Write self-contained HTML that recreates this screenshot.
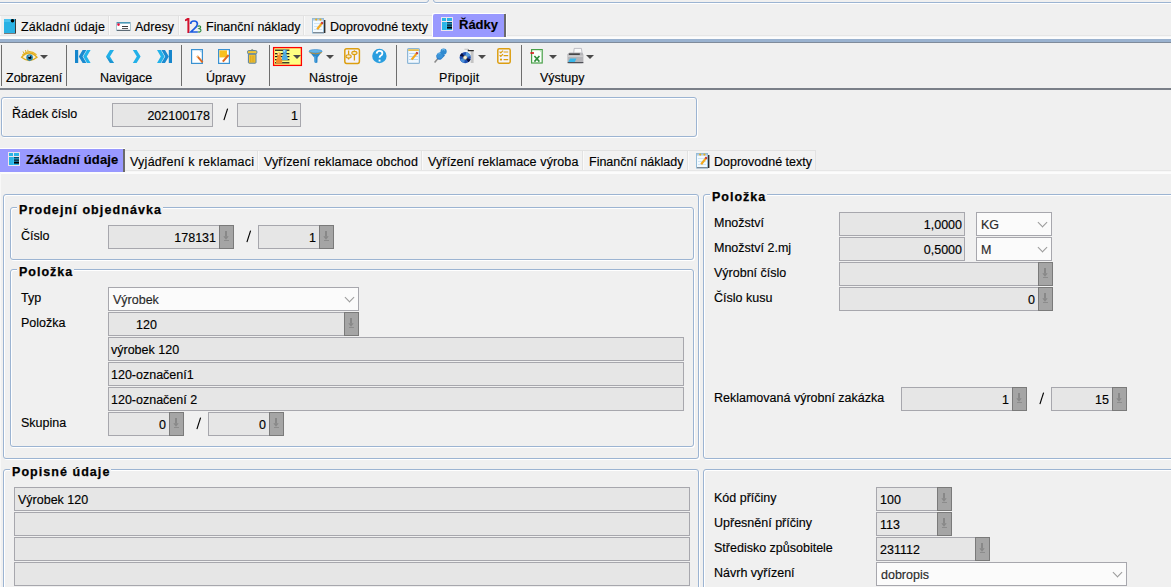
<!DOCTYPE html>
<html><head><meta charset="utf-8">
<style>
*{box-sizing:border-box}
html,body{margin:0;padding:0}
body{width:1171px;height:587px;overflow:hidden;position:relative;background:#f0f0f0;font-family:"Liberation Sans",sans-serif;font-size:12.5px;color:#000;-webkit-text-stroke:0.15px #000}
.a{position:absolute}
.t{position:absolute;white-space:nowrap;line-height:14px;height:14px}
.b{font-weight:bold}
.hl{position:absolute;height:1px;background:#9cb4d2}
.vl{position:absolute;width:1px;background:#9cb4d2}
.grp{position:absolute;border:1px solid #9cb4d2;border-radius:3px;box-shadow:inset 1px 1px 0 #fff, 1px 1px 0 #fff}
.gt{position:absolute;white-space:nowrap;line-height:14px;height:14px;font-weight:bold;background:#f0f0f0;padding:0 1px 0 2px;-webkit-text-stroke:0.25px #000}
.fld{position:absolute;height:24px;background:#e6e6e6;border:1px solid #a7a7ad;line-height:24px;padding:0 4px;white-space:nowrap}
.r{text-align:right;padding-right:2px}
.btn{position:absolute;top:-1px;right:-1px;width:15px;height:24px;background:#a5a5a5;border:1px solid #7a7a7a}
.cmb{position:absolute;height:24px;background:#fbfbfb;border:1px solid #a7a7ad;line-height:24px;padding:0 4px;white-space:nowrap;color:#333}
.sep{position:absolute;top:45px;width:1px;height:41px;background:#6d6d6d}
.tab{position:absolute;top:15px;height:20px;border-top:1px solid #e2e2e2;border-right:1px solid #e2e2e2;box-shadow:inset 1px 0 0 #fafafa}
.stab{position:absolute;top:150px;height:21px;border-top:1px solid #e2e2e2;border-right:1px solid #e2e2e2;box-shadow:inset 1px 0 0 #fafafa;background:#f2f2f2}
.chev{position:absolute;right:3px;top:9px;width:10px;height:6px}
.chev:before{content:"";position:absolute;left:1px;top:-3px;width:6px;height:6px;border-right:1px solid #9a9a9a;border-bottom:1px solid #9a9a9a;transform:rotate(45deg)}
</style></head><body>

<!-- top panel border -->
<div class="a" style="left:-5px;top:-20px;width:434px;height:23px;border:1px solid #9cb4d2;border-radius:3px;box-shadow:0 1px 0 #fff"></div>
<div class="a" style="left:433px;top:-20px;width:760px;height:23px;border:1px solid #9cb4d2;border-radius:3px;box-shadow:0 1px 0 #fff"></div>

<!-- top tabs -->
<div class="tab" style="left:0;width:109px"></div>
<div class="tab" style="left:109px;width:70px"></div>
<div class="tab" style="left:179px;width:125px"></div>
<div class="tab" style="left:304px;width:129px"></div>
<div class="a" style="left:0;top:35px;width:1171px;height:1px;background:#e6e6e6"></div><div class="a" style="left:0;top:36px;width:1171px;height:1px;background:#f6f6f6"></div><div class="a" style="left:0;top:37px;width:1171px;height:2px;background:#fcfcfc"></div>
<div class="a" style="left:0;top:39px;width:1171px;height:3px;background:#9ab2cf"></div>
<div class="a" style="left:0;top:42px;width:1171px;height:1px;background:#7f8b9b"></div>

<div class="a" style="left:433px;top:14px;width:73px;height:23px;background:#9999ff;border-radius:2px 0 0 0;box-shadow:-1px -1px 0 #fff,1px 0 0 #fafafa;border-right:2px solid #6a6a6a"></div>

<div class="t" style="left:21px;top:20px;letter-spacing:0.15px">Základní údaje</div>
<div class="t" style="left:135px;top:20px">Adresy</div>
<div class="t" style="left:206px;top:20px">Finanční náklady</div>
<div class="t" style="left:330px;top:20px">Doprovodné texty</div>
<div class="t b" style="left:459px;top:18px;font-size:13px">Řádky</div>

<!-- toolbar -->
<div class="sep" style="left:1px"></div>
<div class="sep" style="left:66px"></div>
<div class="sep" style="left:181px"></div>
<div class="sep" style="left:269px"></div>
<div class="sep" style="left:396px"></div>
<div class="sep" style="left:521px"></div>
<div class="a" style="left:0;top:88px;width:1171px;height:2px;background:#7a7f88"></div>

<div class="t" style="left:6px;top:71px">Zobrazení</div>
<div class="t" style="left:100px;top:71px">Navigace</div>
<div class="t" style="left:206px;top:71px">Úpravy</div>
<div class="t" style="left:309px;top:71px;letter-spacing:0.3px">Nástroje</div>
<div class="t" style="left:439px;top:71px;letter-spacing:0.3px">Připojit</div>
<div class="t" style="left:540px;top:71px">Výstupy</div>

<!-- Řádek číslo panel -->
<div class="grp" style="left:1px;top:97px;width:696px;height:40px"></div>
<div class="t" style="left:12px;top:107px">Řádek číslo</div>
<div class="fld r" style="left:112px;top:103px;width:101px">202100178</div>
<svg class="a" style="left:223px;top:108px" width="6" height="13"><line x1="0.9" y1="12.2" x2="4.6" y2="0.6" stroke="#000" stroke-width="1.15"/></svg>
<div class="fld r" style="left:237px;top:103px;width:64px">1</div>

<!-- sub tabs -->
<div class="stab" style="left:124px;width:134px"></div>
<div class="stab" style="left:258px;width:164px"></div>
<div class="stab" style="left:422px;width:161px"></div>
<div class="stab" style="left:583px;width:105px"></div>
<div class="stab" style="left:688px;width:128px"></div>
<div class="a" style="left:0;top:170px;width:1171px;height:1px;background:#e6e6e6"></div><div class="a" style="left:0;top:171px;width:1171px;height:1px;background:#f7f7f7"></div>
<div class="a" style="left:0;top:149px;width:125px;height:23px;background:#9999ff;border-right:2px solid #6a6a6a;box-shadow:0 -1px 0 #fff"></div>
<div class="a" style="left:0;top:172px;width:1171px;height:2px;background:#fcfcfc"></div>
<div class="a" style="left:0;top:173px;width:1px;height:414px;background:#f8f8f8"></div>

<div class="t b" style="left:26px;top:153px;font-size:13px;letter-spacing:0.15px">Základní údaje</div>
<div class="t" style="left:130px;top:155px;letter-spacing:0.25px">Vyjádření k reklamaci</div>
<div class="t" style="left:264px;top:155px;letter-spacing:0.12px">Vyřízení reklamace obchod</div>
<div class="t" style="left:428px;top:155px;letter-spacing:0.12px">Vyřízení reklamace výroba</div>
<div class="t" style="left:589px;top:155px">Finanční náklady</div>
<div class="t" style="left:714px;top:155px">Doprovodné texty</div>


<!-- ===== left outer panel ===== -->
<div class="grp" style="left:3px;top:194px;width:696px;height:265px"></div>
<div class="grp" style="left:10px;top:207px;width:684px;height:53px"></div>
<div class="gt" style="left:17px;top:203px;letter-spacing:1.1px">Prodejní objednávka</div>
<div class="t" style="left:21px;top:229px">Číslo</div>
<div class="fld r" style="left:108px;top:225px;width:126px;padding-right:17px">178131<div class="btn"><svg width="13" height="22" style="position:absolute;left:0;top:0"><rect x="5" y="5" width="2" height="5.5" fill="#888"/><path d="M3.3 10.2h5.4l-2.7 3.6z" fill="#888"/><rect x="4" y="14" width="5" height="1" fill="#8c8c8c"/></svg></div></div>
<svg class="a" style="left:246px;top:230px" width="6" height="13"><line x1="0.9" y1="12.2" x2="4.6" y2="0.6" stroke="#000" stroke-width="1.15"/></svg>
<div class="fld r" style="left:258px;top:225px;width:76px;padding-right:17px">1<div class="btn"><svg width="13" height="22" style="position:absolute;left:0;top:0"><rect x="5" y="5" width="2" height="5.5" fill="#888"/><path d="M3.3 10.2h5.4l-2.7 3.6z" fill="#888"/><rect x="4" y="14" width="5" height="1" fill="#8c8c8c"/></svg></div></div>

<div class="grp" style="left:10px;top:269px;width:684px;height:178px"></div>
<div class="gt" style="left:17px;top:265px;letter-spacing:1.0px">Položka</div>
<div class="t" style="left:21px;top:291px">Typ</div>
<div class="cmb" style="left:108px;top:287px;width:251px">Výrobek<div class="chev"></div></div>
<div class="t" style="left:21px;top:316px">Položka</div>
<div class="fld" style="left:108px;top:312px;width:251px;padding-left:27px">120<div class="btn"><svg width="13" height="22" style="position:absolute;left:0;top:0"><rect x="5" y="5" width="2" height="5.5" fill="#888"/><path d="M3.3 10.2h5.4l-2.7 3.6z" fill="#888"/><rect x="4" y="14" width="5" height="1" fill="#8c8c8c"/></svg></div></div>
<div class="fld" style="left:108px;top:337px;width:576px;padding-left:2px">výrobek 120</div>
<div class="fld" style="left:108px;top:362px;width:576px;padding-left:2px">120-označení1</div>
<div class="fld" style="left:108px;top:387px;width:576px;padding-left:2px">120-označení 2</div>
<div class="t" style="left:21px;top:416px">Skupina</div>
<div class="fld r" style="left:108px;top:412px;width:76px;padding-right:17px">0<div class="btn"><svg width="13" height="22" style="position:absolute;left:0;top:0"><rect x="5" y="5" width="2" height="5.5" fill="#888"/><path d="M3.3 10.2h5.4l-2.7 3.6z" fill="#888"/><rect x="4" y="14" width="5" height="1" fill="#8c8c8c"/></svg></div></div>
<svg class="a" style="left:196px;top:417px" width="6" height="13"><line x1="0.9" y1="12.2" x2="4.6" y2="0.6" stroke="#000" stroke-width="1.15"/></svg>
<div class="fld r" style="left:208px;top:412px;width:76px;padding-right:17px">0<div class="btn"><svg width="13" height="22" style="position:absolute;left:0;top:0"><rect x="5" y="5" width="2" height="5.5" fill="#888"/><path d="M3.3 10.2h5.4l-2.7 3.6z" fill="#888"/><rect x="4" y="14" width="5" height="1" fill="#8c8c8c"/></svg></div></div>

<!-- ===== right panel ===== -->
<div class="grp" style="left:703px;top:194px;width:480px;height:265px"></div>
<div class="gt" style="left:710px;top:190px;letter-spacing:1.0px">Položka</div>
<div class="t" style="left:714px;top:216px">Množství</div>
<div class="fld r" style="left:839px;top:212px;width:126px">1,0000</div>
<div class="cmb" style="left:976px;top:212px;width:76px">KG<div class="chev"></div></div>
<div class="t" style="left:714px;top:241px">Množství 2.mj</div>
<div class="fld r" style="left:839px;top:237px;width:126px">0,5000</div>
<div class="cmb" style="left:976px;top:237px;width:76px">M<div class="chev"></div></div>
<div class="t" style="left:714px;top:266px">Výrobní číslo</div>
<div class="fld r" style="left:839px;top:262px;width:214px;padding-right:17px"><div class="btn"><svg width="13" height="22" style="position:absolute;left:0;top:0"><rect x="5" y="5" width="2" height="5.5" fill="#888"/><path d="M3.3 10.2h5.4l-2.7 3.6z" fill="#888"/><rect x="4" y="14" width="5" height="1" fill="#8c8c8c"/></svg></div></div>
<div class="t" style="left:714px;top:291px">Číslo kusu</div>
<div class="fld r" style="left:839px;top:287px;width:214px;padding-right:17px">0<div class="btn"><svg width="13" height="22" style="position:absolute;left:0;top:0"><rect x="5" y="5" width="2" height="5.5" fill="#888"/><path d="M3.3 10.2h5.4l-2.7 3.6z" fill="#888"/><rect x="4" y="14" width="5" height="1" fill="#8c8c8c"/></svg></div></div>
<div class="t" style="left:714px;top:391px">Reklamovaná výrobní zakázka</div>
<div class="fld r" style="left:901px;top:387px;width:126px;padding-right:17px">1<div class="btn"><svg width="13" height="22" style="position:absolute;left:0;top:0"><rect x="5" y="5" width="2" height="5.5" fill="#888"/><path d="M3.3 10.2h5.4l-2.7 3.6z" fill="#888"/><rect x="4" y="14" width="5" height="1" fill="#8c8c8c"/></svg></div></div>
<svg class="a" style="left:1039px;top:392px" width="6" height="13"><line x1="0.9" y1="12.2" x2="4.6" y2="0.6" stroke="#000" stroke-width="1.15"/></svg>
<div class="fld r" style="left:1051px;top:387px;width:76px;padding-right:17px">15<div class="btn"><svg width="13" height="22" style="position:absolute;left:0;top:0"><rect x="5" y="5" width="2" height="5.5" fill="#888"/><path d="M3.3 10.2h5.4l-2.7 3.6z" fill="#888"/><rect x="4" y="14" width="5" height="1" fill="#8c8c8c"/></svg></div></div>

<!-- ===== popisné údaje ===== -->
<div class="grp" style="left:3px;top:469px;width:696px;height:140px"></div>
<div class="gt" style="left:10px;top:465px;letter-spacing:1.05px">Popisné údaje</div>
<div class="fld" style="left:14px;top:487px;width:676px;padding-left:3px">Výrobek 120</div>
<div class="fld" style="left:14px;top:512px;width:676px"></div>
<div class="fld" style="left:14px;top:537px;width:676px"></div>
<div class="fld" style="left:14px;top:562px;width:676px"></div>

<!-- ===== right bottom ===== -->
<div class="grp" style="left:703px;top:469px;width:480px;height:140px"></div>
<div class="t" style="left:714px;top:491px">Kód příčiny</div>
<div class="fld" style="left:876px;top:487px;width:76px;padding-left:3px">100<div class="btn"><svg width="13" height="22" style="position:absolute;left:0;top:0"><rect x="5" y="5" width="2" height="5.5" fill="#888"/><path d="M3.3 10.2h5.4l-2.7 3.6z" fill="#888"/><rect x="4" y="14" width="5" height="1" fill="#8c8c8c"/></svg></div></div>
<div class="t" style="left:714px;top:516px">Upřesnění příčiny</div>
<div class="fld" style="left:876px;top:512px;width:76px;padding-left:3px">113<div class="btn"><svg width="13" height="22" style="position:absolute;left:0;top:0"><rect x="5" y="5" width="2" height="5.5" fill="#888"/><path d="M3.3 10.2h5.4l-2.7 3.6z" fill="#888"/><rect x="4" y="14" width="5" height="1" fill="#8c8c8c"/></svg></div></div>
<div class="t" style="left:714px;top:541px">Středisko způsobitele</div>
<div class="fld" style="left:876px;top:537px;width:114px;padding-left:3px">231112<div class="btn"><svg width="13" height="22" style="position:absolute;left:0;top:0"><rect x="5" y="5" width="2" height="5.5" fill="#888"/><path d="M3.3 10.2h5.4l-2.7 3.6z" fill="#888"/><rect x="4" y="14" width="5" height="1" fill="#8c8c8c"/></svg></div></div>
<div class="t" style="left:714px;top:566px">Návrh vyřízení</div>
<div class="cmb" style="left:876px;top:562px;width:251px">dobropis<div class="chev"></div></div>

<!--ICONS--><svg class="a" style="left:0;top:0" width="1171" height="180">
<!-- tab icon: Zakladni udaje (book) -->
<rect x="4" y="19" width="11" height="14" fill="#2ab2e4"/>
<rect x="4" y="19" width="7" height="3" fill="#48c2ee"/>
<rect x="15" y="19" width="1" height="15" fill="#3a3a3a"/>
<rect x="4" y="33" width="12" height="1" fill="#7a7a7a"/>
<circle cx="12.5" cy="20.8" r="1.8" fill="#000"/>
<!-- Adresy card -->
<rect x="116" y="22" width="15" height="9" fill="#fdfeff"/>
<rect x="116" y="22" width="15" height="1.6" fill="#4b98b6"/>
<rect x="116" y="29.8" width="15" height="1.2" fill="#5d6b76"/>
<rect x="116" y="22" width="1" height="9" fill="#a9c4d0"/>
<rect x="130" y="22" width="1" height="9" fill="#a9c4d0"/>
<circle cx="118.5" cy="24.6" r="1.3" fill="#e8123c"/>
<rect x="122" y="26" width="6" height="1" fill="#3a3a3a"/>
<rect x="122" y="28" width="6" height="1" fill="#5a5a5a"/>
<!-- 123 -->
<path d="M187.4 18 h2 v15 h-2 v-12.6 l-2.4 0.8 v-1.6 z" fill="#d2102c"/>
<path d="M190.6 24 q0-3 3.4-3 q3.4 0 3.4 3 q0 2-3 4.6 l-3.6 3.4 h7" fill="none" stroke="#1c5be0" stroke-width="1.7"/>
<path d="M197.6 26.4 q1.6-1.2 2.8 0 q0.8 1.2-1.2 2.2 q2.2 0.6 1.6 2.4 q-0.8 1.6-3 0.8" fill="none" stroke="#2a8c40" stroke-width="1.2"/>
<!-- Doprovodne texty notepad (tab) -->
<g id="np">
<rect x="312.5" y="18.5" width="11" height="14.5" fill="#f2faff" stroke="#94bcd8" stroke-width="1"/>
<rect x="324" y="20" width="1.4" height="13" fill="#2e2e2e"/>
<rect x="313" y="32" width="11" height="1.2" fill="#7d8a96"/>
<rect x="313" y="19" width="10" height="1.6" fill="#b4c8e0"/>
<circle cx="316.2" cy="19.6" r="1.1" fill="#e2b020"/>
<circle cx="320.4" cy="19.6" r="1.1" fill="#e2b020"/>
<rect x="314" y="23" width="8" height="1" fill="#cfe4f4"/>
<rect x="314" y="26" width="8" height="1" fill="#cfe4f4"/>
<rect x="314" y="29" width="8" height="1" fill="#cfe4f4"/>
<line x1="317.2" y1="29.2" x2="321.6" y2="23.6" stroke="#f4a81c" stroke-width="2.2"/>
<line x1="321.4" y1="23.8" x2="322.8" y2="22.2" stroke="#c8302a" stroke-width="2.2"/>
</g>
<!-- Radky grid icon -->
<g id="grid">
<rect x="441" y="17" width="12" height="14" fill="#ece4ee"/>
<rect x="442" y="18" width="4" height="3" fill="#2ab4e6"/>
<rect x="447" y="18" width="5" height="3" fill="#2ab4e6"/>
<rect x="442" y="22" width="4" height="8" fill="#2ab4e6"/>
<rect x="446" y="22" width="1" height="8" fill="#38c4f0"/>
<rect x="447" y="22" width="5" height="8" fill="#2ab4e6"/>
<rect x="447" y="22" width="5" height="1.4" fill="#0a4a66"/>
<rect x="447" y="24.4" width="5" height="1.4" fill="#0a2030"/>
<rect x="447" y="26.6" width="5" height="2" fill="#000"/>
</g>
<use href="#grid" transform="translate(-433 135)"/>
<use href="#np" transform="translate(384 135)"/>

<!-- toolbar: eye -->
<path d="M21.6 57.2 q7.4-8.4 15.4 0 q-7.6 6.6-15.4 0z" fill="#f6f0dc" stroke="#e0ac1a" stroke-width="1.3"/>
<path d="M22.5 55 q6.5-6.6 14 -0.2" fill="none" stroke="#e6b422" stroke-width="1.2"/>
<path d="M24 53.4 l-1 -2 M26 52.2 l-0.6 -2.2 M28 51.6 l-0.2 -1.8" stroke="#d8a820" stroke-width="0.9"/>
<circle cx="29.6" cy="57.6" r="3.3" fill="#2a86ae"/>
<circle cx="29.8" cy="57.4" r="1.5" fill="#050505"/>
<rect x="28.6" y="55.6" width="1.2" height="1.2" fill="#fff"/>
<path d="M40 55 h8 l-4 4z" fill="#4a4a4a"/>
<!-- nav first -->
<rect x="75" y="50" width="3.2" height="13" fill="#1686cc"/>
<path d="M78.8 56.5 L82.6 50 h3.8 l-3.8 6.5 l3.8 6.5 h-3.8z" fill="#1a8ad0"/>
<path d="M83.2 56.5 L87 50 h3.6 l-3.8 6.5 l3.8 6.5 h-3.6z" fill="#22b2ea"/>
<!-- prev -->
<path d="M106 56.5 L110 50 h4 l-4 6.5 l4 6.5 h-4z" fill="#22b0e8"/>
<path d="M106 56.5 L110 63 h4 l-0.6 -1z" fill="#1a80c0" opacity="0.6"/>
<!-- next -->
<path d="M140.6 56.5 L136.6 50 h-3.8 l4 6.5 l-4 6.5 h3.8z" fill="#22b0e8"/>
<!-- last -->
<path d="M164.6 56.5 L160.8 50 h-3.8 l3.8 6.5 l-3.8 6.5 h3.8z" fill="#22b2ea"/>
<path d="M168.8 56.5 L165 50 h-3.6 l3.8 6.5 l-3.8 6.5 h3.6z" fill="#1a8ad0"/>
<rect x="168.8" y="50" width="3.2" height="13" fill="#1686cc"/>
<!-- new doc -->
<rect x="191.6" y="49.6" width="10.8" height="13.8" fill="#fff" stroke="#3a92d2" stroke-width="1.2"/>
<path d="M199 50.2 h2.8 v2.8z" fill="#a6d2f0"/>
<line x1="197.2" y1="56.2" x2="202.6" y2="62.4" stroke="#e06a20" stroke-width="2"/>
<line x1="197" y1="56" x2="198" y2="57.1" stroke="#f0c080" stroke-width="2"/>
<!-- edit doc -->
<rect x="218.6" y="49.6" width="10.8" height="13.8" fill="#fff" stroke="#3a92d2" stroke-width="1.2"/>
<rect x="219.4" y="50.4" width="7.6" height="7" fill="#f8c020"/>
<line x1="228.6" y1="55" x2="222.8" y2="61.6" stroke="#e06a20" stroke-width="2"/>
<!-- trash -->
<path d="M250.6 50.6 q1.6-2 3.2 0z" fill="#f0c030" stroke="#5a7a98" stroke-width="0.9"/>
<rect x="247.5" y="50.6" width="9.4" height="3.2" rx="1.2" fill="#f4c634" stroke="#5580a4" stroke-width="1"/>
<path d="M248.4 54.2 h7.6 v8.2 q0 0.8-0.8 0.8 h-6 q-0.8 0-0.8-0.8z" fill="#f4c232" stroke="#5580a4" stroke-width="1"/>
<path d="M250.6 55.6 v6.4 M252.2 55.6 v6.4 M253.8 55.6 v6.4" stroke="#d0a020" stroke-width="0.7"/>
<!-- highlighted button -->
<rect x="273.6" y="47.6" width="27.8" height="17.8" fill="#ffff82" stroke="#ff0000" stroke-width="1.3"/>
<rect x="275" y="49.6" width="14.4" height="1.2" fill="#111"/>
<rect x="275" y="53.1" width="14.4" height="1.2" fill="#111"/>
<rect x="275" y="56" width="14.4" height="1.2" fill="#111"/>
<rect x="275" y="59.1" width="14.4" height="1.2" fill="#111"/>
<rect x="275" y="62.2" width="14.4" height="1.2" fill="#111"/>
<path d="M281.8 60 q0-4.6 1.8-6 q-1-0.8-1-2.2 q0-2.6 2.2-2.6 q2.2 0 2.2 2.6 q0 1.4-1 2.2 q1.8 1.4 1.8 6z" fill="#4eaae0"/>
<circle cx="284.2" cy="51" r="0.9" fill="#a8d8f4"/>
<path d="M275.9 63.4 q0-4.8 1.9-6.2 q-1-0.8-1-2.2 q0-2.6 2.3-2.6 q2.3 0 2.3 2.6 q0 1.4-1 2.2 q1.9 1.4 1.9 6.2z" fill="#f48c2c"/>
<circle cx="278.6" cy="54" r="0.9" fill="#fbd8b0"/>
<path d="M293 55 h8 l-4 4z" fill="#4a4a4a"/>
<!-- funnel -->
<path d="M309 51.2 q6.6 3.6 13.2 0 l-4.6 6.2 l-0.2 5.2 q-1.6 1-3 -0.4 l-0.2 -4.8z" fill="#2a88cc"/>
<ellipse cx="315.6" cy="51.2" rx="6.6" ry="1.7" fill="#64b4e8" stroke="#3a8ccc" stroke-width="0.6"/>
<path d="M309.4 52.6 q6.2 2.6 12.4 0" fill="none" stroke="#c8902a" stroke-width="0.9"/>
<path d="M315 56 v6" stroke="#6ab8ea" stroke-width="0.8"/>
<path d="M326 55 h8 l-4 4z" fill="#4a4a4a"/>
<!-- sliders -->
<rect x="344.8" y="48.8" width="14.6" height="14.6" rx="1.8" fill="#f2f2fc" stroke="#dc9e10" stroke-width="1.5"/>
<path d="M348.6 50.5 v9 M354.4 50.5 v10" stroke="#dc9e10" stroke-width="1.3"/>
<ellipse cx="348.6" cy="56.4" rx="2.6" ry="1.6" fill="#f4e8c8" stroke="#dc9e10" stroke-width="1.1"/>
<ellipse cx="354.4" cy="53" rx="2.6" ry="1.6" fill="#f4e8c8" stroke="#dc9e10" stroke-width="1.1"/>
<!-- help -->
<circle cx="379.4" cy="56" r="7.2" fill="#2a9edf"/>
<path d="M376.6 53.6 q0.4-2.8 3-2.8 q2.8 0 2.8 2.4 q0 1.6-1.8 2.6 q-1 0.6-1 2" fill="none" stroke="#fff" stroke-width="1.8"/>
<rect x="378.6" y="59.6" width="1.9" height="1.9" fill="#fff"/>
<!-- notepad toolbar -->
<rect x="407.6" y="48.6" width="11.8" height="14.8" rx="1" fill="#f0f8ff" stroke="#8cb6d6" stroke-width="1.2"/>
<rect x="408.2" y="49.2" width="10.6" height="1.8" fill="#e8c050"/>
<rect x="409" y="53" width="9" height="1" fill="#bcd8f0"/>
<rect x="409" y="56" width="9" height="1" fill="#bcd8f0"/>
<rect x="409" y="59" width="9" height="1" fill="#bcd8f0"/>
<line x1="411.6" y1="59.6" x2="416.6" y2="53.6" stroke="#f4a81c" stroke-width="2.2"/>
<line x1="416.4" y1="53.8" x2="417.6" y2="52.4" stroke="#c8302a" stroke-width="2.2"/>
<!-- pin -->
<line x1="434.6" y1="62.6" x2="438.4" y2="58" stroke="#8a8a8a" stroke-width="1.5"/>
<path d="M441 51.8 l4 3.8 l-4 4 q-2.6 0.6-3.8-0.6 q-1.4-1.4-0.8-4z" fill="#2a7cc8"/>
<circle cx="439.8" cy="55.4" r="3" fill="#3a94d8"/>
<circle cx="443.6" cy="51.6" r="3.1" fill="#2f8ad0"/>
<path d="M442 50 q1.6-1 3 0.2" stroke="#7ac4ee" stroke-width="1" fill="none"/>
<path d="M438.2 54 q1-1 2.2-0.6" stroke="#6ab8ea" stroke-width="0.9" fill="none"/>
<!-- cd -->
<path d="M464.4 49.6 h9 v13.4 h-9z" fill="#f6f6f6"/>
<rect x="470.6" y="51" width="3" height="12" fill="#c4c4c4"/>
<path d="M467.6 48.8 l1.4 1.2 h4.8 v1.2 h-6z" fill="#2a2a2a"/>
<rect x="464.4" y="48.6" width="3.4" height="1.4" fill="#cfcfcf"/>
<circle cx="465.2" cy="57.6" r="5.6" fill="#1f4fb0"/>
<path d="M465.2 57.6 L459.8 55.8 A5.6 5.6 0 0 1 462 53 z" fill="#0a1040"/>
<path d="M465.2 57.6 L470.6 59.2 A5.6 5.6 0 0 1 468.4 62.2 z" fill="#0a1040"/>
<path d="M465.2 57.6 L466.2 52.1 A5.6 5.6 0 0 1 470.5 56 z" fill="#5a9ee0"/>
<path d="M465.2 57.6 L464.2 63.1 A5.6 5.6 0 0 1 460 59.4 z" fill="#4a8ed8"/>
<circle cx="465.2" cy="57.6" r="1.8" fill="#f8f4e0" stroke="#c8b060" stroke-width="0.5"/>
<path d="M478 55 h8 l-4 4z" fill="#4a4a4a"/>
<!-- checklist -->
<rect x="497.8" y="48.8" width="12.4" height="14.4" rx="1.4" fill="#f4f4fc" stroke="#dc9e10" stroke-width="1.5"/>
<path d="M499.6 51.6 l1.2 1.2 l2.2-2.2 M499.6 55.2 l1.2 1.2 l2.2-2.2" fill="none" stroke="#dc9e10" stroke-width="1.2"/>
<circle cx="501" cy="59.6" r="1.1" fill="#dc9e10"/>
<path d="M503.6 52 h4.6 M503.6 55.6 h4.6 M503.6 59.6 h4.6" stroke="#dc9e10" stroke-width="1.2"/>
<!-- excel -->
<rect x="531.6" y="49.6" width="10.6" height="13.4" fill="#fbfffb" stroke="#48a048" stroke-width="1.2"/>
<path d="M539 50.2 h2.6 v2.6z" fill="#b8e0b8"/>
<rect x="530.4" y="52.2" width="3.6" height="1.6" fill="#d81818"/>
<path d="M534.4 56 l5 5.6 M539.4 56 l-5 5.6" stroke="#2e8c3a" stroke-width="1.6"/>
<path d="M549 55 h8 l-4 4z" fill="#4a4a4a"/>
<!-- printer -->
<path d="M574.2 48.4 h7.2 l0.8 5.4 h-8.6z" fill="#f8f8f8" stroke="#a8a8b0" stroke-width="0.7"/>
<path d="M567.4 54.6 q0.4-2 2.4-2.2 h11.6 q1.8 0.2 2 2.4 v6.4 q-0.2 1.8-2 2 h-12 q-2-0.2-2-2z" fill="#b4b4b8"/>
<path d="M569.2 53.4 h10.4 q0.8 0.4 0 1.4 h-10.4 q-0.8-0.6 0-1.4z" fill="#222"/>
<rect x="568" y="55.6" width="14.8" height="1" fill="#dcdcdc"/>
<path d="M570 58.4 h6.4 l-1.8 4.2 h-6.6z" fill="#38b8ea"/>
<rect x="567.6" y="62" width="15.8" height="1.2" fill="#505058"/>
<path d="M586 55 h8 l-4 4z" fill="#4a4a4a"/>
</svg>
<!--/ICONS-->
</body></html>
